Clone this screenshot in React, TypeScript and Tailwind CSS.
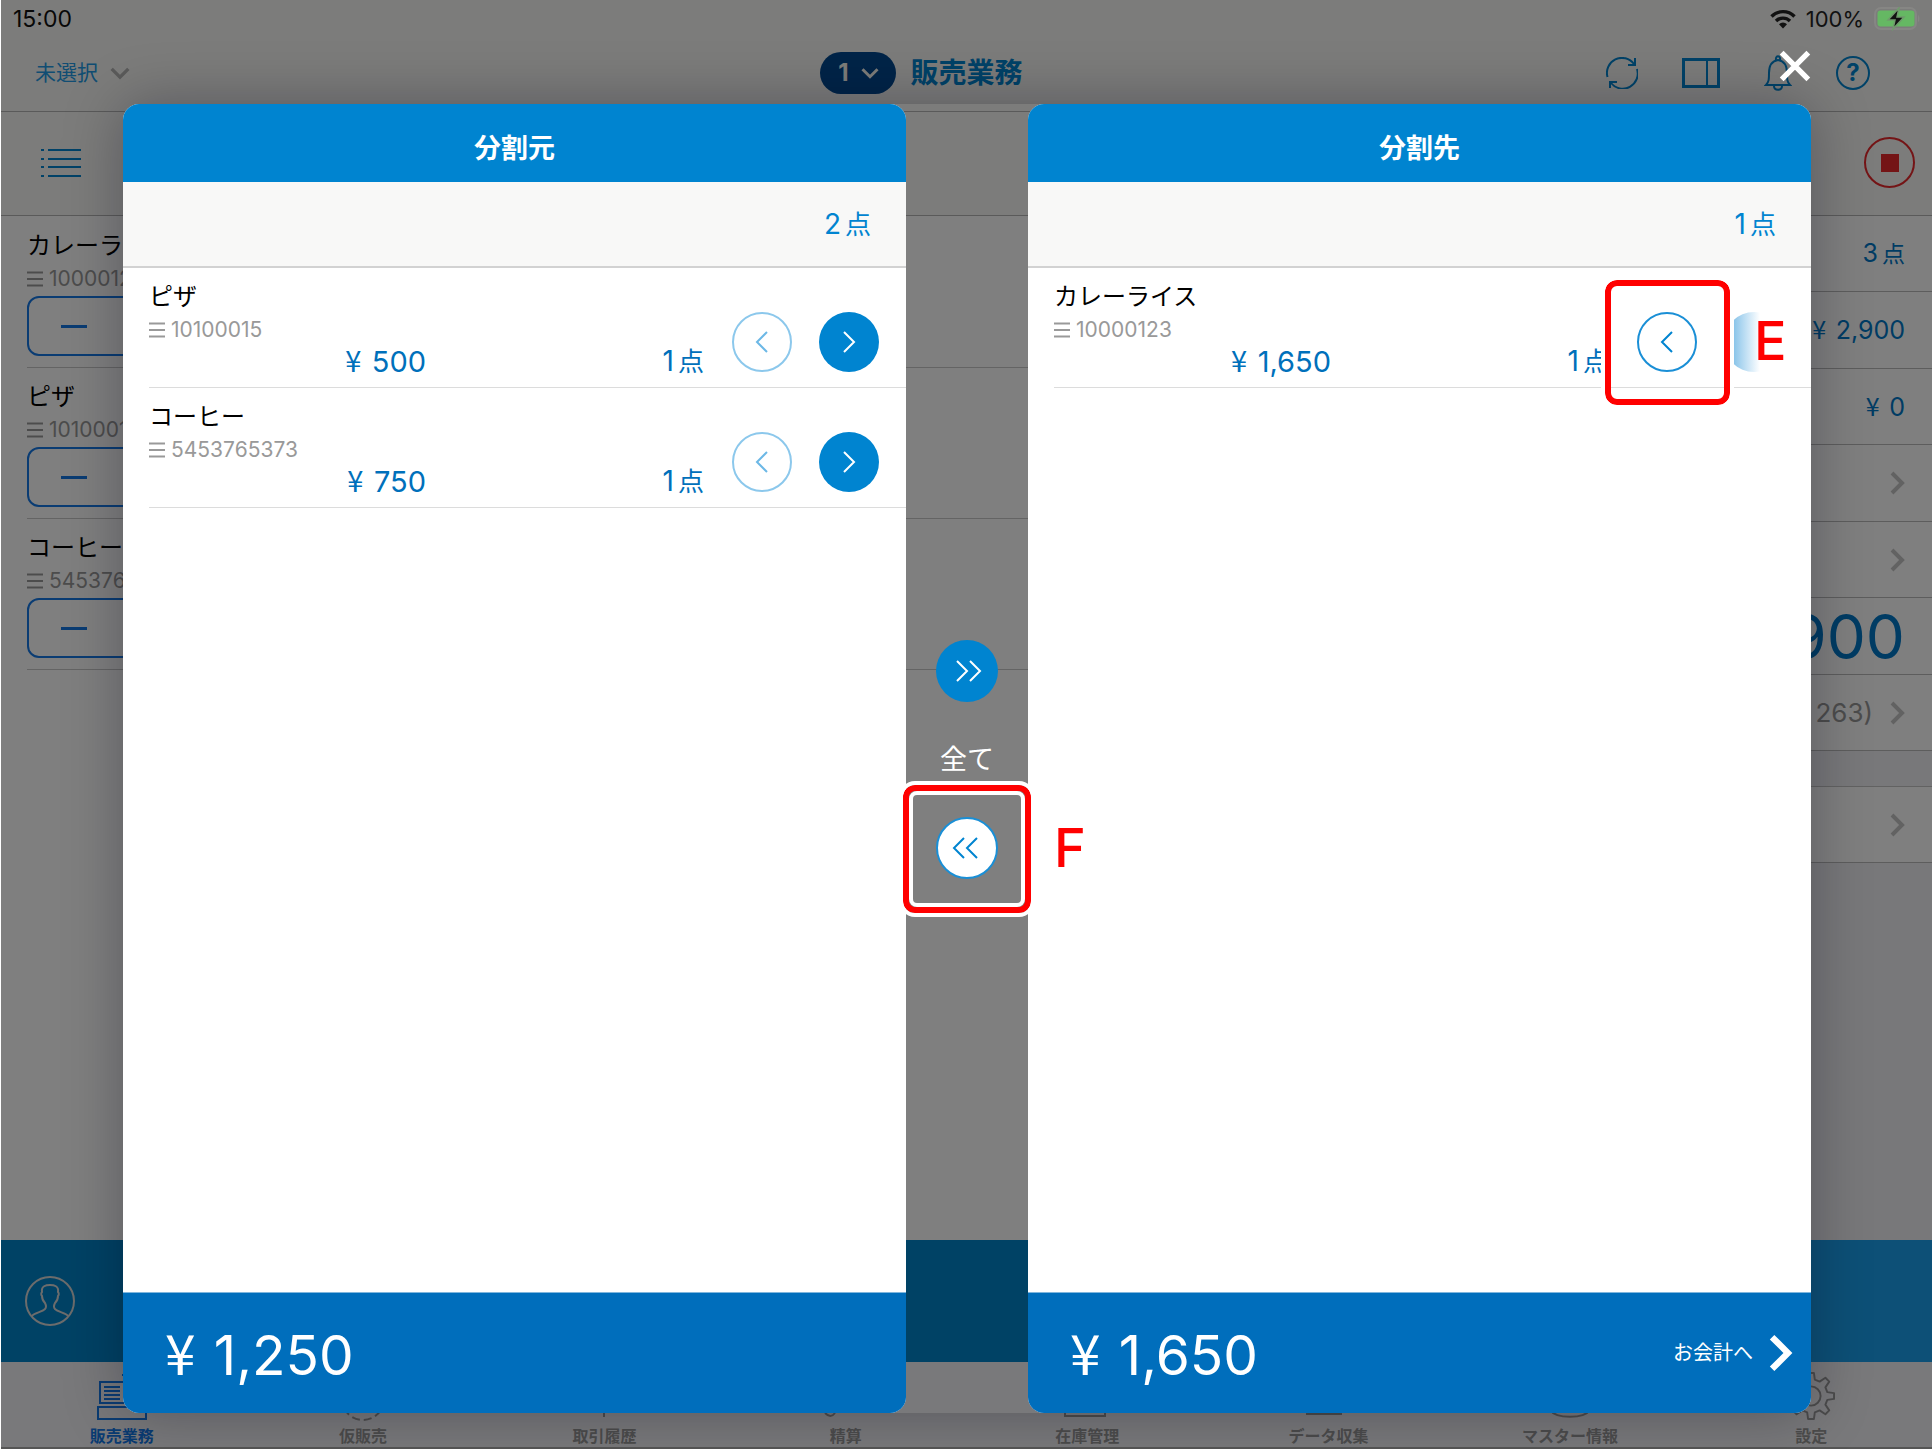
import type { ReactNode } from "react";
import clsx from "clsx";

type Item = { name: string; code: string; price: string };

const SOURCE_ITEMS: Item[] = [
  { name: "ピザ", code: "10100015", price: "500" },
  { name: "コーヒー", code: "5453765373", price: "750" },
];

const TARGET_ITEMS: Item[] = [{ name: "カレーライス", code: "10000123", price: "1,650" }];

const CART_ITEMS: Item[] = [...TARGET_ITEMS, ...SOURCE_ITEMS];

const TABS = [
  { label: "販売業務", icon: <RegisterIcon /> },
  { label: "仮販売", icon: <HoldIcon /> },
  { label: "取引履歴", icon: <HistoryIcon /> },
  { label: "精算", icon: <SettleIcon /> },
  { label: "在庫管理", icon: <StockIcon /> },
  { label: "データ収集", icon: <CollectIcon /> },
  { label: "マスター情報", icon: <MasterIcon /> },
  { label: "設定", icon: <GearIcon /> },
];

const FONT = "font-['Inter','Noto_Sans_CJK_JP',sans-serif]";

/* ---------- icons ---------- */

function Chevron({ d, className, width = 2 }: { d: string; className: string; width?: number }) {
  return (
    <svg viewBox="0 0 24 24" fill="none" stroke="currentColor" strokeWidth={width} className={className} aria-hidden="true">
      <path d={d} />
    </svg>
  );
}

const RIGHT = "M7 2 17 12 7 22";
const LEFT = "M17 2 7 12 17 22";
const DOWN = "M2 7 12 17 22 7";

function MenuLines() {
  return (
    <svg viewBox="0 0 16 16" fill="none" stroke="currentColor" strokeWidth="2" className="h-4 w-4 shrink-0" aria-hidden="true">
      <path d="M0 1.500h16M0 8h16M0 14.500h16" />
    </svg>
  );
}

function ListIcon() {
  return (
    <svg viewBox="0 0 40 30" fill="none" stroke="currentColor" strokeWidth="2" className="h-[30px] w-10" aria-hidden="true">
      <path d="M0 2h3M7 2h33M0 11h3M7 11h33M0 19h3M7 19h33M0 28h3M7 28h33" />
    </svg>
  );
}

function WifiIcon() {
  return (
    <svg viewBox="0 0 26 20" fill="none" stroke="currentColor" strokeWidth="3.400" className="h-5 w-[26px]" aria-hidden="true">
      <path d="M1.500 7.500a16 16 0 0 1 23 0M6 12a10 10 0 0 1 14 0" />
      <path d="M13 19.500 9 15.200a5.600 5.600 0 0 1 8 0z" fill="currentColor" stroke="none" />
    </svg>
  );
}

function BatteryIcon() {
  return (
    <svg viewBox="0 0 46 24" className="h-6 w-[46px]" aria-hidden="true">
      <rect x="1" y="1" width="41" height="21" rx="6" fill="none" stroke="#868684" strokeWidth="2" />
      <rect x="3.500" y="3.500" width="37" height="16" rx="3" fill="#65b863" />
      <path d="M44 8v7c2-1 2-6 0-7z" fill="#868684" />
      <path d="M25 1 14 13h7l-2 9 11-12h-7z" fill="#111" stroke="#6f9a6c" strokeWidth="1.500" />
    </svg>
  );
}

function RefreshIcon() {
  return (
    <svg viewBox="0 0 32 32" fill="none" stroke="currentColor" strokeWidth="2" className="h-8 w-8" aria-hidden="true">
      <path d="M1.500 20A15 15 0 0 1 28 7M29 1v7h-7M31 12A15 15 0 0 1 5 26M4 31v-6h7" />
    </svg>
  );
}

function PanelIcon() {
  return (
    <svg viewBox="0 0 38 30" fill="none" stroke="currentColor" strokeWidth="2" className="h-[30px] w-[38px]" aria-hidden="true">
      <path d="M1.500 1.500h35v27h-35z" strokeWidth="3" />
      <path d="M25 1.500v27" />
    </svg>
  );
}

function BellIcon() {
  return (
    <svg viewBox="0 0 28 36" fill="none" stroke="currentColor" strokeWidth="2" className="h-9 w-7" aria-hidden="true">
      <path d="M2 30c3-3 3-6 3-12C5 11 7 6 14 5c7 1 9 6 9 13 0 6 0 9 3 12z" />
      <path d="M12 5c-1-5 5-5 4 0M10 31c0 5 8 5 8 0" />
    </svg>
  );
}

function PersonIcon() {
  return (
    <svg viewBox="0 0 50 50" fill="none" stroke="currentColor" strokeWidth="2" className="h-[50px] w-[50px]" aria-hidden="true">
      <circle cx="25" cy="25" r="24" />
      <path d="M7 40c2-3 10-4 13-7 2-2 1-4 0-6-2-2-3-4-3-7-1-1-1-3 0-4-1-6 4-7 8-7s9 1 8 7c1 1 1 3 0 4 0 3-1 5-3 7-1 2-2 4 0 6 3 3 11 4 13 7" />
    </svg>
  );
}

function RegisterIcon() {
  return (
    <svg viewBox="0 0 50 48" fill="none" stroke="currentColor" strokeWidth="2" className="h-12 w-[50px]" aria-hidden="true">
      <path d="M25 3h10v6M3 31V10h30v21zM1 35h48v12H1z" />
      <path d="M7 15h16M7 19h16M7 23h16M7 27h16" />
    </svg>
  );
}

function HoldIcon() {
  return (
    <svg viewBox="0 0 48 48" fill="none" stroke="currentColor" strokeWidth="2" strokeDasharray="8 4" className="h-12 w-12 overflow-visible" aria-hidden="true">
      <circle cx="24" cy="27" r="21" />
    </svg>
  );
}

function HistoryIcon() {
  return (
    <svg viewBox="0 0 48 48" fill="none" stroke="currentColor" strokeWidth="2" className="h-12 w-12" aria-hidden="true">
      <path d="M24 8v37" />
    </svg>
  );
}

function SettleIcon() {
  return (
    <svg viewBox="0 0 48 48" fill="none" stroke="currentColor" strokeWidth="2" className="h-12 w-12" aria-hidden="true">
      <path d="M3 41c4 4 7 4 10 0" />
    </svg>
  );
}

function StockIcon() {
  return (
    <svg viewBox="0 0 48 48" fill="none" stroke="currentColor" strokeWidth="2" className="h-12 w-12" aria-hidden="true">
      <path d="M2 10h40v34H2z" />
    </svg>
  );
}

function CollectIcon() {
  return (
    <svg viewBox="0 0 48 48" fill="none" stroke="currentColor" strokeWidth="2" className="h-12 w-12" aria-hidden="true">
      <path d="M2 10h34v32H2z" />
    </svg>
  );
}

function MasterIcon() {
  return (
    <svg viewBox="0 0 48 48" fill="none" stroke="currentColor" strokeWidth="2" className="h-12 w-12" aria-hidden="true">
      <path d="M4 10v28c6 9 34 9 40 0V10" />
    </svg>
  );
}

function GearIcon() {
  return (
    <svg viewBox="0 0 50 50" fill="none" stroke="currentColor" strokeWidth="2" strokeLinejoin="round" className="h-12 w-12" aria-hidden="true">
      <path d="M22 1h6l1 7 5 2 6-4 4 4-4 6 2 5 7 1v6l-7 1-2 5 4 6-4 4-6-4-5 2-1 7h-6l-1-7-5-2-6 4-4-4 4-6-2-5-7-1v-6l7-1 2-5-4-6 4-4 6 4 5-2z" />
      <circle cx="25" cy="25" r="10" />
    </svg>
  );
}

/* ---------- text parts ---------- */

function Yen({ amount, large }: { amount: string; large?: boolean }) {
  return (
    <span>
      <span className={clsx("font-['Noto_Sans_CJK_JP',sans-serif]", large ? "mr-1.5" : "mr-1")}>¥ </span>
      {amount}
    </span>
  );
}

function Count({ n, small }: { n: number; small?: boolean }) {
  return (
    <span className={clsx("inline-flex items-baseline gap-1", small ? "text-[25px]" : "text-[28px]")}>
      <span>{n}</span>
      <span className={small ? "text-[23px]" : "text-[26px]"}>点</span>
    </span>
  );
}

function ItemName({ item }: { item: Item }) {
  return (
    <>
      <p className="text-2xl leading-8 text-black">{item.name}</p>
      <p className="flex h-[34px] items-center gap-1.5 text-[21px] text-[#999]">
        <MenuLines />
        {item.code}
      </p>
    </>
  );
}

/* ---------- screen behind the dialog ---------- */

function StatusBar() {
  return (
    <div className="flex h-9 items-center justify-between px-3 pt-0.5 text-[23px] text-[#111]">
      <span>15:00</span>
      <div className="relative z-20 flex items-center gap-2.5">
        <WifiIcon />
        <span className="text-[22px]">100%</span>
        <BatteryIcon />
      </div>
    </div>
  );
}

function NavBar() {
  return (
    <header className="grid h-[76px] grid-cols-3 items-center border-b border-[#b4b4b4] px-[34px] pb-0.5 text-[#0084d0]">
      <button type="button" className="flex items-center gap-3 text-[21px] text-[#229be6]">
        未選択
        <Chevron d={DOWN} width={4} className="h-5 w-5 text-[#b4b4b4]" />
      </button>
      <div className="flex items-center justify-center gap-3.5 pr-[90px]">
        <button type="button" className="flex h-[42px] w-[76px] items-center justify-center gap-3 rounded-full bg-[#004890] text-2xl font-bold text-[#fafaf5]">
          1
          <Chevron d={DOWN} width={4} className="h-[18px] w-[18px]" />
        </button>
        <h1 className="text-[28px] font-bold">販売業務</h1>
      </div>
      <div className="flex items-center justify-end gap-11 pr-7">
        <button type="button" aria-label="更新"><RefreshIcon /></button>
        <button type="button" aria-label="表示切替"><PanelIcon /></button>
        <button type="button" aria-label="お知らせ"><BellIcon /></button>
        <button type="button" aria-label="ヘルプ" className="flex h-[34px] w-[34px] items-center justify-center rounded-full border-2 text-2xl font-bold">?</button>
      </div>
    </header>
  );
}

function Toolbar() {
  return (
    <div className="flex h-[104px] items-center justify-between border-b border-[#b4b4b4] pr-[17px] pb-0.5 pl-10 text-[#0084d0]">
      <button type="button" aria-label="一覧"><ListIcon /></button>
      <button type="button" aria-label="中止" className="flex h-[51px] w-[51px] items-center justify-center rounded-full border-2 border-[#e8282c]">
        <span className="h-[18px] w-[18px] bg-[#e8282c]" />
      </button>
    </div>
  );
}

function CartList() {
  return (
    <ul className="flex-1 pt-px pl-[26px]">
      {CART_ITEMS.map((item) => (
        <li key={item.code} className="h-[151px] border-b border-[#c8c8c8] pt-[13px]">
          <ItemName item={item} />
          <button type="button" aria-label={`${item.name}を減らす`} className="flex h-[60px] w-48 items-center rounded-xl border-2 border-[#1478e6] pl-8">
            <span className="h-[3px] w-[26px] bg-[#1478e6]" />
          </button>
        </li>
      ))}
    </ul>
  );
}

function SummaryRow({ children, tall }: { children?: ReactNode; tall?: boolean }) {
  return (
    <div className={clsx("flex items-center justify-end border-b border-[#bbb] bg-white pr-[27px] text-[25px] text-[#0078c8]", tall ? "h-[77px]" : "h-[76px]")}>
      {children}
    </div>
  );
}

function Summary() {
  const more = <Chevron d={RIGHT} width={4} className="-mr-1 h-6 w-6 text-[#c4c4c4]" />;
  return (
    <aside className="w-[600px] bg-[#f0f0f4]">
      <SummaryRow><Count n={3} small /></SummaryRow>
      <SummaryRow tall><Yen amount="2,900" /></SummaryRow>
      <SummaryRow><Yen amount="0" /></SummaryRow>
      <SummaryRow tall>{more}</SummaryRow>
      <SummaryRow>{more}</SummaryRow>
      <SummaryRow tall><span className="text-[62px]">2,900</span></SummaryRow>
      <SummaryRow>
        <span className="mr-3 text-[26px] text-[#999]">(内税 ¥ 263)</span>
        {more}
      </SummaryRow>
      <div className="h-9 border-b border-[#c4c4c4]" />
      <SummaryRow>{more}</SummaryRow>
    </aside>
  );
}

function TabBar() {
  return (
    <nav className="grid h-[87px] grid-cols-8 border-b-2 border-[#aaa] bg-[#f3f2f6]">
      {TABS.map((tab, i) => (
        <a
          key={tab.label}
          href="#"
          className={clsx("flex flex-col items-center justify-end gap-1.5 pb-px text-base leading-5 font-bold", i === 0 ? "text-[#1478e6]" : "text-[#999]")}
        >
          {tab.icon}
          {tab.label}
        </a>
      ))}
    </nav>
  );
}

/* ---------- split dialog ---------- */

const ROUND = "flex items-center justify-center rounded-full";

function Callout({ children, className }: { children: string; className: string }) {
  return <span className={clsx("absolute text-[54px] leading-[80px] font-medium text-[#f00]", className)}>{children}</span>;
}

function SplitRow({ item, side }: { item: Item; side: "source" | "target" }) {
  const source = side === "source";
  return (
    <li className="relative ml-[26px] flex h-[120px] border-b border-[#dcdcdc]">
      <div className="w-[277px] pt-[13px]">
        <ItemName item={item} />
        <p className="-mt-1.5 text-right text-[29px] leading-9 text-[#0070bb]">
          <Yen amount={item.price} />
        </p>
      </div>
      <p className="mt-[75px] w-[278px] text-right leading-9 text-[#0070bb]">
        <Count n={1} />
      </p>
      <div className="ml-7 flex items-center gap-[27px] pt-7">
        <button
          type="button"
          aria-label="分割元へ戻す"
          disabled={source}
          className={clsx(ROUND, "h-[60px] w-[60px] border-2", source ? "border-[#8cc8ec] text-[#6cb8e6]" : "border-[#1a8fd6] text-[#0084d0]")}
        >
          <Chevron d={LEFT} className="h-6 w-6" />
        </button>
        {source ? (
          <button type="button" aria-label="分割先へ移す" className={clsx(ROUND, "h-[60px] w-[60px] bg-[#0084d0] text-white")}>
            <Chevron d={RIGHT} className="h-6 w-6" />
          </button>
        ) : (
          <span className="h-[60px] w-[60px] rounded-full bg-linear-to-r from-[#58aee0] to-white to-60%" />
        )}
      </div>
      {!source && (
        <>
          <span className="absolute top-3 left-[551px] h-[125px] w-[125px] rounded-xl border-[6px] border-[#f00] outline-4 outline-white" />
          <Callout className="top-[33px] left-[700px]">E</Callout>
        </>
      )}
    </li>
  );
}

function SplitPanel({ title, items, total, side }: { title: string; items: Item[]; total: string; side: "source" | "target" }) {
  return (
    <section className="flex min-w-0 flex-1 flex-col overflow-hidden rounded-2xl bg-white">
      <h2 className="flex h-[78px] items-center justify-center bg-[#0084d0] pt-3 text-[27px] font-bold text-white">{title}</h2>
      <p className="flex h-[86px] items-center justify-end border-b-2 border-[#d2d2d2] bg-[#f8f8f7] pr-[35px] text-[#0084d0]">
        <Count n={items.length} />
      </p>
      <ul className="flex-1">
        {items.map((item) => (
          <SplitRow key={item.code} item={item} side={side} />
        ))}
      </ul>
      <footer className="flex h-[121px] items-center justify-between border-t border-[#7fb6dd] bg-[#006ebc] pr-3 pl-[42px] text-white">
        <span className="text-[55px]">
          <Yen amount={total} large />
        </span>
        {side === "target" && (
          <button type="button" className="flex items-center gap-2 text-[20px]">
            お会計へ
            <Chevron d={RIGHT} width={4} className="h-[38px] w-[38px]" />
          </button>
        )}
      </footer>
    </section>
  );
}

function SplitDialog() {
  return (
    <div role="dialog" aria-label="分割" className="absolute inset-0 z-10 flex bg-black/50 pt-[104px] pr-[121px] pb-9 pl-[122px]">
      <div className="flex flex-1 rounded-2xl shadow-[0_0_60px_rgba(0,0,20,0.3)]">
        <SplitPanel title="分割元" items={SOURCE_ITEMS} total="1,250" side="source" />
        <div className="relative z-10 flex w-[122px] flex-col items-center pt-[536px] text-[27px] text-white">
          <button type="button" aria-label="全て分割先へ" className={clsx(ROUND, "h-[62px] w-[62px] bg-[#0084d0]")}>
            <Chevron d="M2 2 12 12 2 22M15 2 25 12 15 22" className="h-6 w-7 overflow-visible" />
          </button>
          <p className="my-8 leading-[51px]">全て</p>
          <button type="button" aria-label="全て分割元へ" className={clsx(ROUND, "h-[62px] w-[62px] border-2 border-[#1a8fd6] bg-white text-[#0084d0]")}>
            <Chevron d="M9 2-1 12 9 22M22 2 12 12 22 22" className="h-6 w-7 overflow-visible" />
          </button>
          <span className="absolute top-[681px] -left-[3px] h-[128px] w-[128px] rounded-xl border-[6px] border-[#f00] outline-4 outline-white">
            <span className="block h-full rounded-lg border-4 border-white" />
          </span>
          <Callout className="top-[704px] left-[148px]">F</Callout>
        </div>
        <SplitPanel title="分割先" items={TARGET_ITEMS} total="1,650" side="target" />
      </div>
      <button type="button" aria-label="閉じる" className="absolute top-[50px] right-[121px] text-white">
        <Chevron d="M2 2 22 22M22 2 2 22" width={4} className="h-8 w-8 overflow-visible" />
      </button>
    </div>
  );
}

export default function App() {
  return (
    <div className={clsx("relative flex min-h-screen flex-col border-l border-white bg-[#f9f9f6]", FONT)}>
      <StatusBar />
      <NavBar />
      <Toolbar />
      <main className="flex flex-1 bg-white">
        <CartList />
        <Summary />
      </main>
      <div className="flex h-[122px] bg-[#0084ca] text-[#d8d8d8]">
        <button type="button" aria-label="担当者" className="flex-1 pl-6 text-left"><PersonIcon /></button>
        <div className="w-[600px] bg-[#1aa0ee]" />
      </div>
      <TabBar />
      <SplitDialog />
    </div>
  );
}
